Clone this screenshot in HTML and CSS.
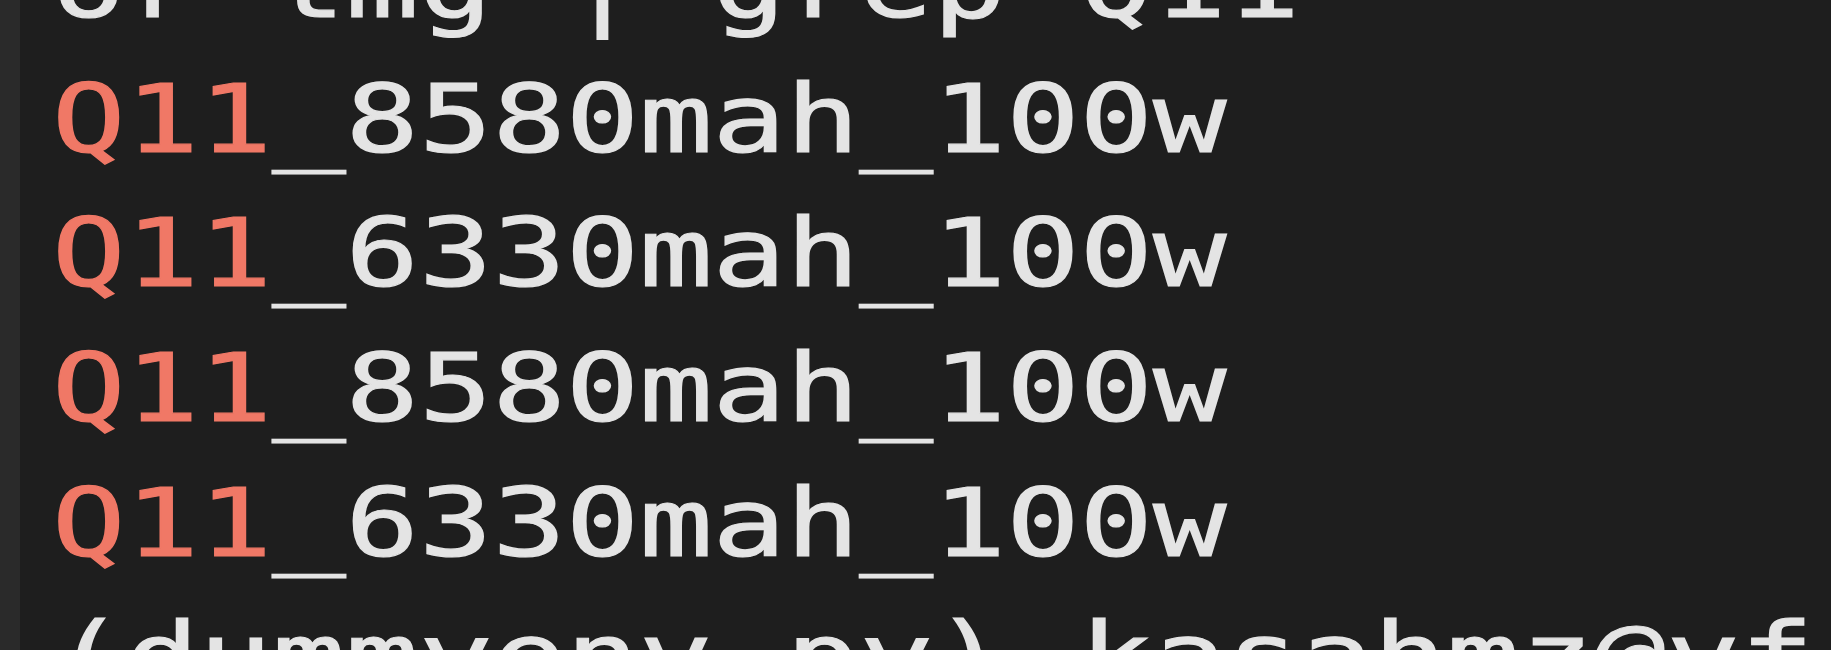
FILE: index.html
```html
<!DOCTYPE html>
<html lang="en">
<head>
<meta charset="utf-8">
<title>Terminal</title>
<link rel="stylesheet" href="styles.css">
</head>
<body>
<div class="window">
  <div class="gutter"></div>
  <div class="term">
    <div class="line">or tmg | grep Q11</div>
    <div class="line"><span class="match">Q11</span>_8580mah_100w</div>
    <div class="line"><span class="match">Q11</span>_6330mah_100w</div>
    <div class="line"><span class="match">Q11</span>_8580mah_100w</div>
    <div class="line"><span class="match">Q11</span>_6330mah_100w</div>
    <div class="line">(dummyenv_py) kasahmz@vf</div>
  </div>
</div>
</body>
</html>
```
FILE: styles.css
```css
html, body {
  margin: 0;
  padding: 0;
  background: #1e1e1e;
}

.window {
  display: flex;
  width: 1831px;
  height: 650px;
  overflow: hidden;
  background: #1e1e1e;
}

.gutter {
  flex: 0 0 20px;
  background: #2a2a2a;
}

.term {
  flex: 1;
  margin-top: -82px;
  padding-left: 32px;
  font-family: "DejaVu Sans Mono", monospace;
  font-size: 94px;
  line-height: 134.7px;
  color: #e4e4e4;
}

.line {
  height: 134.7px;
  white-space: pre;
  transform: scaleX(1.297);
  transform-origin: 0 0;
  -webkit-text-stroke: 1.2px currentColor;
}

.match {
  color: #f07866;
}
```
